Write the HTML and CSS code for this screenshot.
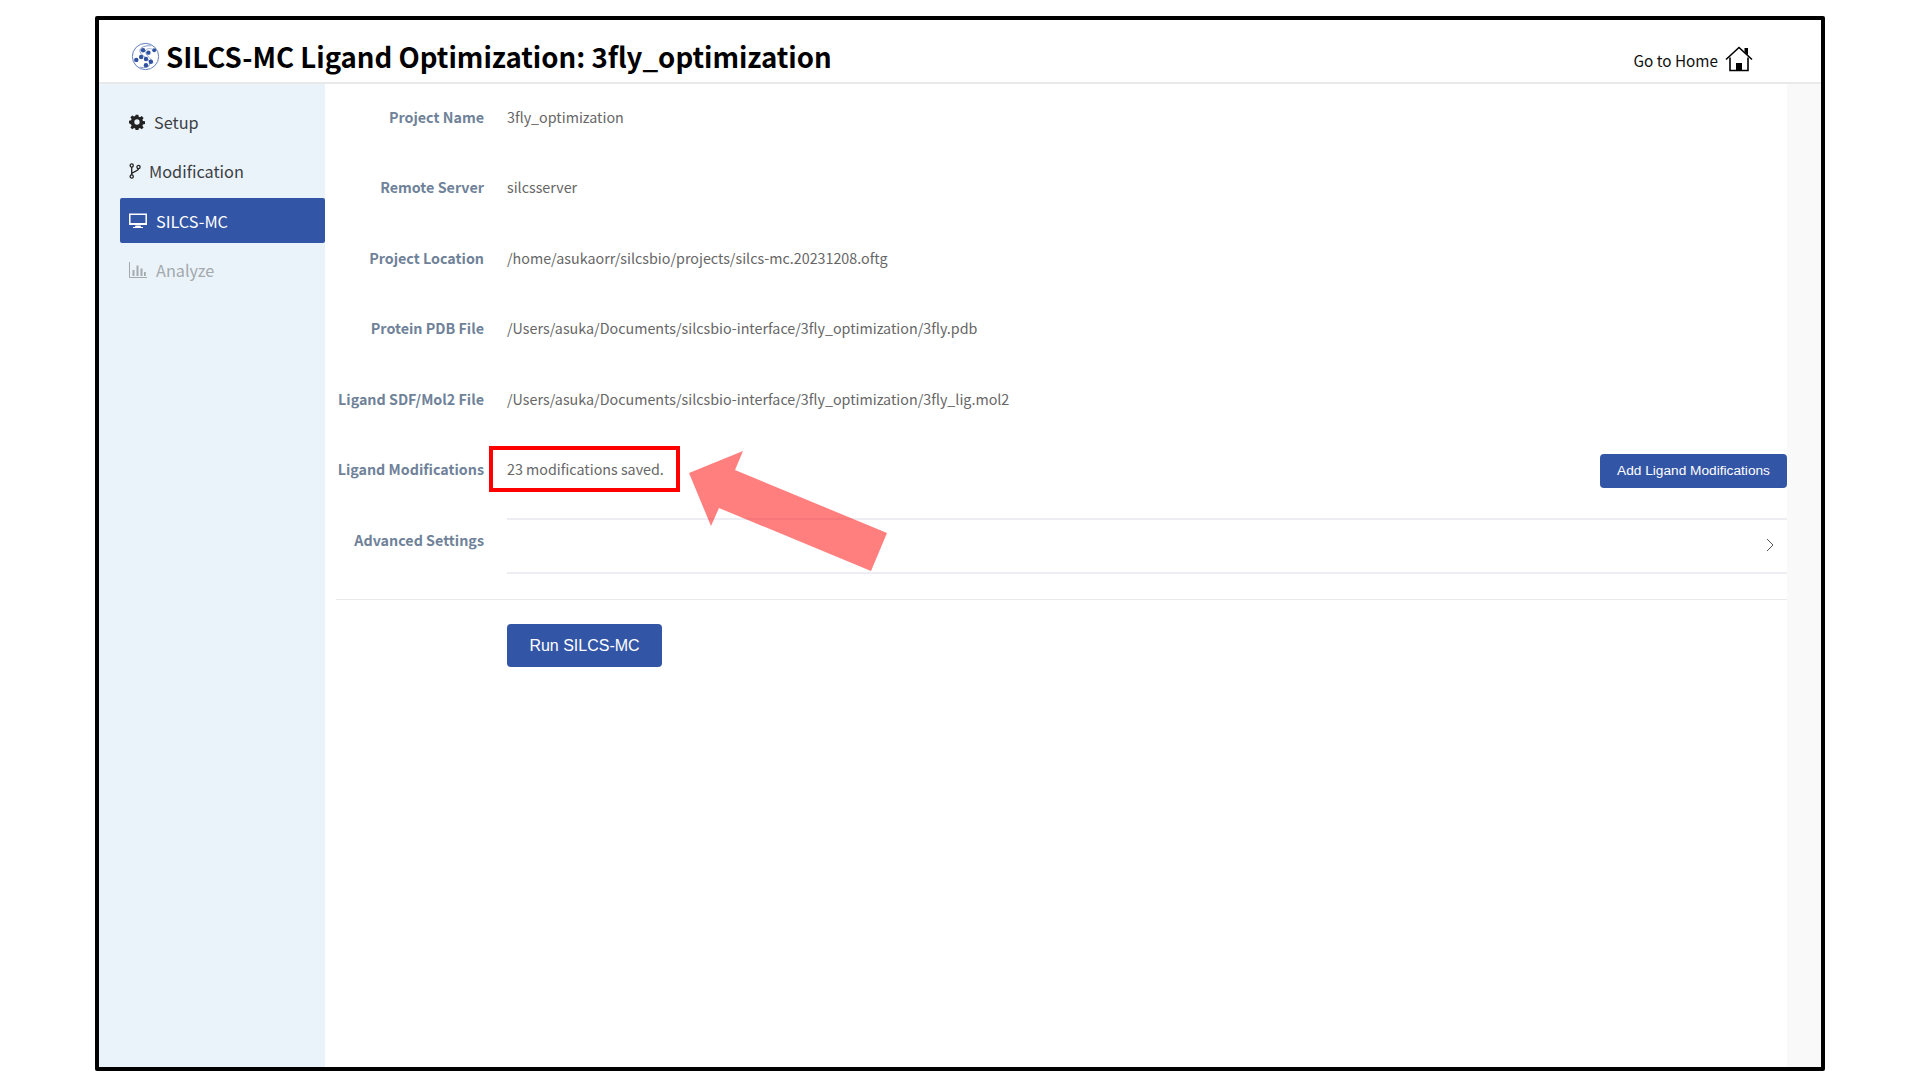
FILE: index.html
```html
<!DOCTYPE html>
<html lang="en">
<head>
<meta charset="utf-8">
<title>SILCS-MC Ligand Optimization</title>
<link rel="stylesheet" href="styles.css">
</head>
<body>
<div class="frame">
  <header class="topbar">
    <div class="brand">
      <svg class="logo" viewBox="0 0 30 30">
        <circle cx="15" cy="15" r="13.600" fill="none" stroke="#5c78b8" stroke-width="1"/>
        <path d="M21 4C13 3 7 7 10 11.500s9 5 9.500 10S14 27 9 26" fill="none" stroke="#7f95c8" stroke-width="1"/>
        <path d="M25 9C19 5 14 7 15 11s7 6 8 11" fill="none" stroke="#9db0d8" stroke-width="1"/>
        <g fill="#2f51a0">
          <circle cx="12.500" cy="8.500" r="2.300"/><circle cx="18" cy="11" r="2.300"/><circle cx="24" cy="8.500" r="2"/>
          <circle cx="5.500" cy="18.500" r="2.300"/><circle cx="10.500" cy="15.500" r="2.300"/><circle cx="15.500" cy="17.500" r="2.300"/>
          <circle cx="20.500" cy="20.500" r="2.300"/><circle cx="15.500" cy="24" r="2.300"/>
        </g>
      </svg>
      <h1 class="title">SILCS-MC Ligand Optimization: 3fly_optimization</h1>
    </div>
    <a class="home">Go to Home
      <svg class="home-icon" viewBox="0 0 28 26">
        <path d="M1 13.500 14 1.500l13 12" fill="none" stroke="#000" stroke-width="1.600"/>
        <path d="M5 11.500V24.500h18V11.500" fill="none" stroke="#000" stroke-width="1.600"/>
        <path d="M11 25v-8h6v8z" fill="#000"/>
        <path d="M19.500 2h3.500v7l-3.500-3z" fill="#000"/>
      </svg>
    </a>
  </header>
  <div class="body">
    <nav class="sidebar">
      <a class="nav-item nav-setup">
        <svg class="ico" viewBox="0 0 24 24"><path fill-rule="evenodd" fill="#222" d="M10 1h4l.6 3.100 1.900.8 2.600-1.800 2.800 2.800-1.800 2.600.8 1.900 3.100.6v4l-3.100.6-.8 1.900 1.800 2.600-2.800 2.800-2.600-1.800-1.900.8-.6 3.100h-4l-.6-3.100-1.900-.8-2.600 1.800-2.800-2.800 1.800-2.600-.8-1.900L0 14v-4l3.100-.6.8-1.900-1.800-2.600 2.800-2.800 2.600 1.800 1.900-.8zM12 8a4 4 0 1 0 0 8 4 4 0 0 0 0-8z"/></svg>
        <span>Setup</span>
      </a>
      <a class="nav-item nav-mod">
        <svg class="ico-branch" viewBox="0 0 12 16"><g fill="none" stroke="#222" stroke-width="1.300"><circle cx="2.700" cy="2.500" r="1.600"/><circle cx="2.700" cy="13.500" r="1.600"/><circle cx="9.500" cy="4" r="1.600"/><path d="M2.700 4.100v7.800M9.500 5.600c0 3-6.800 3-6.800 5.500"/></g></svg>
        <span>Modification</span>
      </a>
      <a class="nav-item active">
        <svg class="ico-wide" viewBox="0 0 18 16"><path fill="none" stroke="#fff" stroke-width="1.500" d="M.8 1.200h16.400v10H.8z"/><path fill="#fff" d="M.8 10h16.400v1.800H.8zM6.500 12.500h5l.5 1.500h2v1H4v-1h2z"/></svg>
        <span>SILCS-MC</span>
      </a>
      <a class="nav-item disabled">
        <svg class="ico-wide" viewBox="0 0 18 16"><path fill="none" stroke="#a3a9ad" stroke-width="1" d="M.5 0v15.500H18"/><path fill="#a3a9ad" d="M3.500 8h2v6h-2zM7.500 3.500h2V14h-2zM11.500 6.500h2V14h-2zM15 10h1.800v4H15z"/></svg>
        <span>Analyze</span>
      </a>
    </nav>
    <main class="content">
      <div class="form">
        <div class="label">Project Name</div><div class="value">3fly_optimization</div>
        <div class="label">Remote Server</div><div class="value">silcsserver</div>
        <div class="label">Project Location</div><div class="value">/home/asukaorr/silcsbio/projects/silcs-mc.20231208.oftg</div>
        <div class="label">Protein PDB File</div><div class="value">/Users/asuka/Documents/silcsbio-interface/3fly_optimization/3fly.pdb</div>
        <div class="label">Ligand SDF/Mol2 File</div><div class="value">/Users/asuka/Documents/silcsbio-interface/3fly_optimization/3fly_lig.mol2</div>
        <div class="label">Ligand Modifications</div>
        <div class="value value-split"><span>23 modifications saved.</span><button class="btn btn-sm">Add Ligand Modifications</button></div>
        <div class="label">Advanced Settings</div>
        <div class="collapse">
          <svg class="chevron" viewBox="0 0 8 14"><path d="M1 1l6 6-6 6" fill="none" stroke="#555" stroke-width="1"/></svg>
        </div>
      </div>
      <div class="divider"></div>
      <div class="actions"><button class="btn btn-lg">Run SILCS-MC</button></div>
    </main>
    <div class="gutter"></div>
  </div>
  <div class="callout-box"></div>
  <svg class="callout-arrow" viewBox="0 0 204 124"><polygon fill="#ff0000" fill-opacity="0.5" points="2,24 56,2 48,21 200,84 184,122 32,59 24,77"/></svg>
</div>
</body>
</html>
```
FILE: styles.css
```css
* { box-sizing: border-box; }
html, body { margin: 0; height: 100%; background: #fff; }
body {
  padding: 16px 95px 9px;
  font-family: "Noto Sans CJK JP", "Noto Sans", sans-serif;
}
.frame {
  position: relative;
  width: 1730px;
  height: 1055px;
  border: 4px solid #000;
  border-radius: 2px;
  display: flex;
  flex-direction: column;
}
.topbar {
  height: 64px;
  flex: none;
  display: flex;
  align-items: center;
  justify-content: space-between;
  padding: 10px 68px 0 32px;
  border-bottom: 2px solid #e9e9e9;
}
.brand { display: flex; align-items: center; gap: 6px; }
.logo { width: 29px; height: 29px; display: block; }
.title { margin: 0; font-size: 27.600px; line-height: 40px; font-weight: 700; color: #000; }
.home { display: flex; align-items: center; gap: 7px; font-size: 15.300px; line-height: 24px; color: #111; margin-top: 8px; }
.home-icon { width: 28px; height: 26px; display: block; margin-top: -2px; }
.body { flex: 1; display: flex; min-height: 0; }
.sidebar {
  width: 226px;
  flex: none;
  background: #ebf3fa;
  padding: 15px 0 0 21px;
  display: flex;
  flex-direction: column;
}
.nav-item {
  height: 45px;
  margin-bottom: 4.500px;
  display: flex;
  align-items: center;
  padding-left: 9px;
  font-size: 16.300px;
  line-height: 24px;
  color: #3b3f44;
  border-radius: 2px;
}
.nav-setup { gap: 9px; }
.nav-mod { gap: 8px; }
.ico { width: 16px; height: 16px; display: block; }
.ico-branch { width: 12px; height: 16px; display: block; }
.ico-wide { width: 18px; height: 16px; display: block; margin-right: 9px; }
.active { background: #3355a6; color: #fff; }
.disabled { color: #a3a9ad; }
.content { flex: 1; min-width: 0; padding: 0 0 0 9px; }
.form {
  display: grid;
  grid-template-columns: 150px 1fr;
  column-gap: 23px;
  grid-auto-rows: 70.600px;
}
.label {
  text-align: right;
  font-size: 14.300px;
  font-weight: 700;
  line-height: 24px;
  padding-top: 20.500px;
  color: #6f8299;
  white-space: nowrap;
}
.value {
  font-size: 14.300px;
  line-height: 24px;
  padding-top: 20.500px;
  color: #666;
}
.value-split { display: flex; justify-content: space-between; align-items: flex-start; }
.btn {
  border: 0;
  border-radius: 4px;
  background: #3355a6;
  color: #fff;
  font-family: "Liberation Sans", Arial, sans-serif;
  padding: 0;
}
.btn-sm { width: 187px; height: 34px; font-size: 13.700px; margin-top: -3.500px; }
.btn-lg { width: 155px; height: 43px; font-size: 16px; }
.collapse {
  margin-top: 10px;
  height: 56px;
  border-top: 2px solid #eceef3;
  border-bottom: 2px solid #eceef3;
  display: flex;
  align-items: center;
  justify-content: flex-end;
  padding: 0 13px 1px 0;
}
.chevron { width: 8px; height: 14px; display: block; }
.divider { height: 1px; background: #e9e9e9; margin: 21px 0 0 2px; }
.actions { padding: 24px 0 0 173px; }
.gutter { width: 34px; flex: none; background: #f9f9f9; }
.callout-box {
  position: absolute;
  left: 390px;
  top: 426px;
  width: 191px;
  height: 46px;
  border: 4px solid #f00;
}
.callout-arrow {
  position: absolute;
  left: 588px;
  top: 429px;
  width: 204px;
  height: 124px;
  display: block;
}
```
